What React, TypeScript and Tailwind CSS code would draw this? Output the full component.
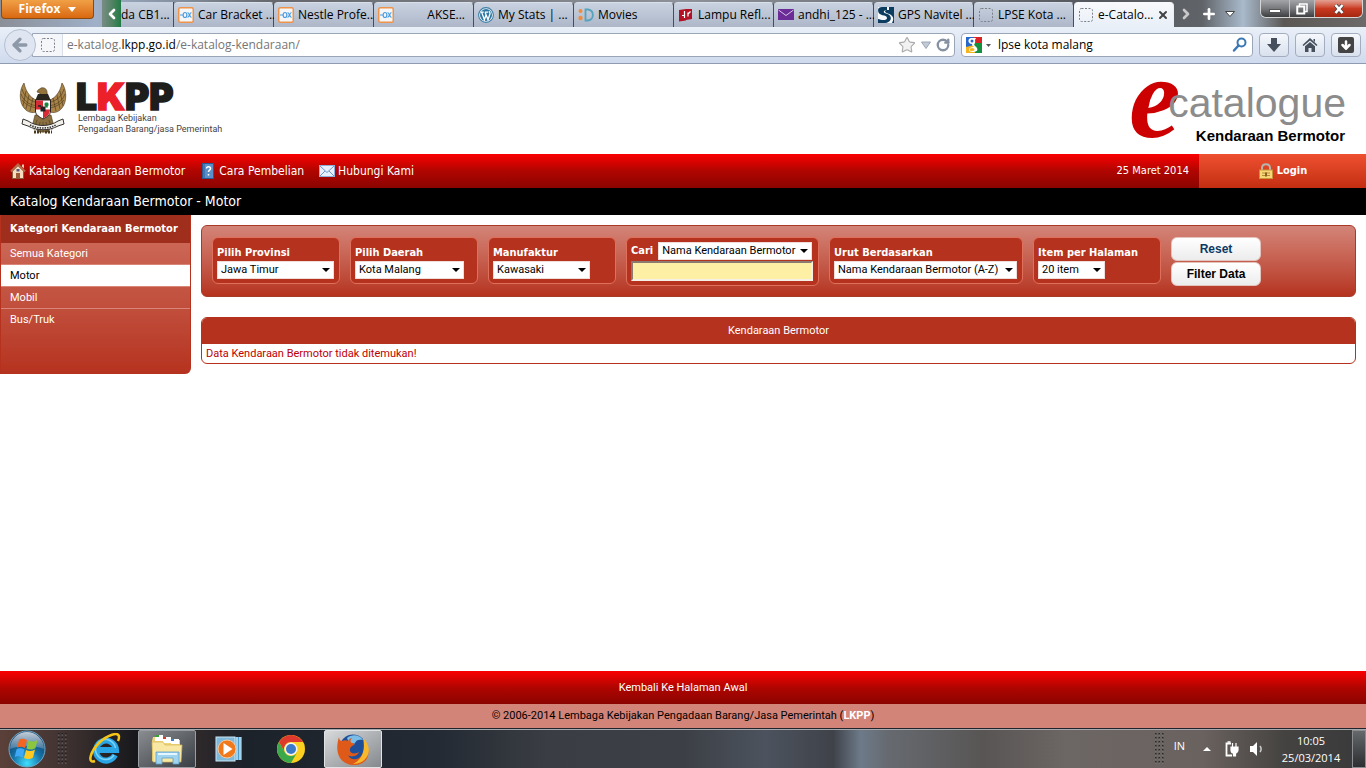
import React from 'react';
import { ArrowDown, ArrowLeft, ChevronLeft, ChevronRight, Plus, RotateCw, Star, X } from 'lucide-react';

type TabIcon = 'ox' | 'wordpress' | 'movies' | 'lampu' | 'mail' | 'navitel' | 'blank';

const tabs: { title: string; icon: TabIcon; indent?: boolean; active?: boolean }[] = [
  { title: 'Car Bracket ...', icon: 'ox' },
  { title: 'Nestle Profe...', icon: 'ox' },
  { title: 'AKSE...', icon: 'ox', indent: true },
  { title: 'My Stats | ...', icon: 'wordpress' },
  { title: 'Movies', icon: 'movies' },
  { title: 'Lampu Refl...', icon: 'lampu' },
  { title: 'andhi_125 - ...', icon: 'mail' },
  { title: 'GPS Navitel ...', icon: 'navitel' },
  { title: 'LPSE Kota ...', icon: 'blank' },
  { title: 'e-Catalo...', icon: 'blank', active: true },
];

const Favicon: React.FC<{ icon: TabIcon }> = ({ icon }) => (
  <svg className="w-4 h-4 shrink-0" viewBox="0 0 16 16" aria-hidden="true">
    {icon === 'ox' && (
      <>
        <rect x="0.75" y="0.75" width="14.5" height="14.5" rx="1.5" fill="#f4f6f8" stroke="#f0934a" strokeWidth="1.5" />
        <path d="M2 8h3M7 5.5c-2.5 0-2.5 5 0 5s2.5-5 0-5M9.5 5.5c2 0 2 5 4 5M9.5 10.500c2 0 2-5 4-5" fill="none" stroke="#4a9be0" strokeWidth="1.2" />
      </>
    )}
    {icon === 'wordpress' && (
      <>
        <circle cx="8" cy="8" r="7.4" fill="#f2f6f9" stroke="#3b7ea6" strokeWidth="1.1" />
        <circle cx="8" cy="8" r="6" fill="#2f77a3" />
        <path d="M2.800 5.200h3M6.800 5.200h3.400M3.700 5.400l2.700 7.400L8.200 7.500M7.200 5.400l2.800 7.400 2-6c.3-1.200-.5-1.800-.9-2.500" fill="none" stroke="#fff" strokeWidth="1.3" />
      </>
    )}
    {icon === 'movies' && (
      <>
        <circle cx="2.500" cy="4" r="2" fill="#f08c3c" />
        <circle cx="2.500" cy="11" r="2.200" fill="#f08c3c" />
        <path d="M7.500 2.500v11h2.500c6.500-1 6.500-10 0-11z" fill="none" stroke="#55a3bd" strokeWidth="1.800" />
      </>
    )}
    {icon === 'lampu' && (
      <>
        <path d="M1 3l7-1v11.500l-7 1zM8 2h6v10l-6 1z" fill="#b31225" />
        <path d="M6.500 4v4.500H4M6.500 8v3M10 5.500v4M10 7l2.500-2.500" fill="none" stroke="#fff" strokeWidth="1.2" />
      </>
    )}
    {icon === 'mail' && (
      <>
        <rect y="2" width="16" height="11" fill="#6b2c97" />
        <path d="M.5 3L8 8.500 15.500 3" fill="none" stroke="#d9c6e8" strokeWidth="1" />
      </>
    )}
    {icon === 'navitel' && (
      <>
        <rect width="16" height="16" fill="#f7fafc" />
        <path d="M11 0h5v16h-2c3-6 0-8-4-9.500C6 5 6 3 10 3h1z" fill="#0d3c61" />
        <path d="M0 3c0 7 9 4 9 8 0 3-6 2-9 1v4h8c6-1 7-8 0-9.500C4 5.500 6 3 9 3V0H4C2 0 0 1 0 3z" fill="#0d3c61" />
      </>
    )}
    {icon === 'blank' && (
      <rect x="1.500" y="1.500" width="13" height="13" rx="2" fill="none" stroke="#7b7f86" strokeDasharray="2 1.500" />
    )}
  </svg>
);

const TabStrip: React.FC = () => (
  <div className="flex items-start h-[27px] bg-[linear-gradient(90deg,#8b8f98_0%,#9fb0c8_7%,#65676c_20%,#8d929a_50%,#55585e_80%,#606368_88%,#a9bacb_91%,#5a5755_94%,#6d6b6a_100%)]">
    <button className="ml-px w-[93px] h-[19px] shrink-0 flex items-center justify-center gap-2 rounded-b-sm border border-t-0 border-[#8a4a12] bg-linear-to-b from-[#f0a045] to-[#d9680c] text-white text-xs font-bold">
      Firefox
      <svg className="w-2 h-[5px]" viewBox="0 0 8 5"><path d="M0 0h8L4 5z" fill="#fff" /></svg>
    </button>
    <button aria-label="Gulir tab ke kiri" className="ml-2 w-[19px] h-[27px] shrink-0 flex items-center justify-center bg-linear-to-r from-[#7a8c85] to-[#1c7a45] text-white">
      <ChevronLeft className="w-4 h-4" strokeWidth={4} />
    </button>
    <div className="flex flex-1 min-w-0 pt-0.5 h-[27px] text-xs text-black whitespace-nowrap">
      <a href="#tab" className="w-[53px] shrink-0 flex items-center overflow-hidden border-r border-[#4a4d55] bg-linear-to-b from-[#c9d2e0] to-[#adb7c8]">da CB1...</a>
      {tabs.map((tab) => (
        <div
          key={tab.title}
          className={
            tab.active
              ? 'flex-1 min-w-0 flex items-center gap-0.5 px-1 border-r border-t border-r-[#e9eff8] border-t-[#f7f9fc] bg-linear-to-b from-[#f7f9fc] to-[#e9eff8] rounded-t-sm'
              : 'flex-1 min-w-0 flex items-center gap-0.5 px-1 border-r border-t border-r-[#4a4d55] border-t-[#d9e0ea] bg-linear-to-b from-[#c9d2e0] to-[#adb7c8] rounded-t-sm'
          }
        >
          <Favicon icon={tab.icon} />
          <a href="#tab" className={tab.indent ? 'flex-1 min-w-0 text-right pr-1' : 'flex-1 min-w-0 pl-0.5'}>{tab.title}</a>
          {tab.active && <button aria-label="Tutup tab"><X className="w-3 h-3 text-[#444]" strokeWidth={4} /></button>}
        </div>
      ))}
    </div>
    <div className="w-[192px] shrink-0 flex items-start">
      <div className="flex items-center h-[27px] pl-1 gap-[7px] text-white">
        <button aria-label="Gulir tab ke kanan"><ChevronRight className="w-4 h-4 text-[#c9c9c9]" strokeWidth={4} /></button>
        <button aria-label="Tab baru"><Plus className="w-4 h-4" strokeWidth={4} /></button>
        <button aria-label="Daftar tab">
          <svg className="w-3 h-2" viewBox="0 0 12 8"><path d="M1.500 1.500h9L6 6.500z" fill="#fff" stroke="#444" /></svg>
        </button>
      </div>
      <div className="ml-auto mr-[3px] flex h-[18px] rounded-b-md border border-t-0 border-[#d5d5d5] overflow-hidden">
        <button aria-label="Kecilkan" className="w-7 flex items-center justify-center bg-linear-to-b from-[#a3a5a8] via-[#77797c] to-[#3c3e40]">
          <span className="w-3 h-1 mt-1 bg-white border border-[#555]" />
        </button>
        <button aria-label="Pulihkan" className="w-[26px] flex items-center justify-center border-x border-[#c0c0c0] bg-linear-to-b from-[#a3a5a8] via-[#77797c] to-[#3c3e40]">
          <svg className="w-3 h-3" viewBox="0 0 12 12"><path d="M3.500 3V1h7.500v7.500H9" fill="none" stroke="#fff" strokeWidth="1.500" /><rect x="1.250" y="3.500" width="7" height="7" fill="none" stroke="#fff" strokeWidth="2" /></svg>
        </button>
        <button aria-label="Tutup" className="w-[47px] flex items-center justify-center bg-linear-to-b from-[#e2a093] via-[#c93a22] to-[#a5270f]">
          <svg className="w-3 h-[10px]" viewBox="0 0 12 10"><path d="M2.500 1l7 8M9.500 1l-7 8" stroke="#444" strokeWidth="4" /><path d="M2.500 1l7 8M9.500 1l-7 8" stroke="#fff" strokeWidth="2.600" /></svg>
        </button>
      </div>
    </div>
  </div>
);

const toolButton = 'w-[30px] h-6 flex items-center justify-center rounded-sm border border-[#a3adbd] bg-linear-to-b from-[#f5f8fc] to-[#d9e1ee] text-[#46505c]';

const AddressBar: React.FC = () => (
  <div className="flex items-center h-[37px] pr-[5px] border-b border-[#8e9bb0] bg-linear-to-b from-[#eaf0f8] to-[#cfdaee] text-xs">
    <button aria-label="Kembali" className="ml-1 -mr-1 z-10 w-8 h-8 shrink-0 flex items-center justify-center rounded-full border border-[#b4bfd0] bg-[#dfe6f1] text-[#8d99a8]">
      <ArrowLeft className="w-5 h-5" strokeWidth={4} />
    </button>
    <div className="flex flex-1 items-center h-6 bg-white border border-[#9aa5b6] rounded-r-sm overflow-hidden">
      <div className="flex items-center justify-center w-[30px] h-full shrink-0 border-r border-[#d8dde6] bg-[#f4f6f9]"><Favicon icon="blank" /></div>
      <a href="#alamat" className="flex-1 pl-1 text-[#767676]">e-katalog.<span className="text-black">lkpp.go.id</span>/e-katalog-kendaraan/</a>
      <button aria-label="Tandai halaman"><Star className="w-[18px] h-[18px] text-[#aaa] fill-[#f2f2f2]" strokeWidth={1.5} /></button>
      <button aria-label="Riwayat alamat" className="ml-1">
        <svg className="w-3 h-3" viewBox="0 0 12 12"><path d="M1.500 3h9L6 9.500z" fill="#c2cad6" stroke="#9ca6b4" /></svg>
      </button>
      <button aria-label="Muat ulang" className="mx-1"><RotateCw className="w-[14px] h-[14px] text-[#8692a2]" strokeWidth={4} /></button>
    </div>
    <div className="ml-1.5 w-[292px] shrink-0 flex items-center h-6 pl-1 pr-1 bg-white border border-[#9aa5b6] rounded-sm">
      <svg className="w-4 h-4 shrink-0" viewBox="0 0 16 16">
        <rect width="16" height="16" rx="1" fill="#fff" />
        <path d="M8 0h8v6H9z" fill="#dc2323" />
        <path d="M8 6h8v10H8z" fill="#15903f" />
        <path d="M0 0h8v9L0 11z" fill="#2667c9" />
        <path d="M0 10l8-2 1 8H0z" fill="#f3b51f" />
        <path d="M10 1H5C1 2 2 7 6 7c0 2 1 2 2 3-6 0-7 5-1 5 6 0 5-4 2-6C7 7 10 7 9 3z" fill="#fff" />
        <circle cx="6" cy="4" r="1.500" fill="#2667c9" />
        <ellipse cx="6" cy="12.500" rx="2.500" ry="1.500" fill="#f3b51f" />
      </svg>
      <svg className="ml-1 w-[5px] h-[3px] shrink-0" viewBox="0 0 5 3"><path d="M0 0h5L2.500 3z" fill="#555" /></svg>
      <input aria-label="Pencarian web" defaultValue="lpse kota malang" className="flex-1 min-w-0 ml-[7px] outline-none text-black" />
      <button aria-label="Cari di web">
        <svg className="w-4 h-4" viewBox="0 0 16 16"><circle cx="9.500" cy="5.500" r="4" fill="none" stroke="#3b78b4" strokeWidth="2" /><path d="M6.500 8.500L2 13.500" stroke="#3b78b4" strokeWidth="2.500" strokeLinecap="round" /></svg>
      </button>
    </div>
    <div className="ml-1.5 flex gap-1.5 shrink-0">
      <button aria-label="Unduhan" className={toolButton}>
        <svg className="w-4 h-4" viewBox="0 0 16 16"><path d="M5 1h6v6h4l-7 8-7-8h4z" fill="currentColor" /></svg>
      </button>
      <button aria-label="Beranda" className={toolButton}>
        <svg className="w-4 h-4" viewBox="0 0 16 16"><path d="M8 1l7.500 7-1 1L8 3.500 1.500 9l-1-1zM8 5l5 4.200V15H9.500v-4h-3v4H3V9.200zM11.500 2H13v3l-1.500-1.300z" fill="currentColor" /></svg>
      </button>
      <button aria-label="Pengelola unduhan" className={toolButton}>
        <span className="w-4 h-4 flex items-center justify-center rounded-xs bg-[#444] text-white"><ArrowDown className="w-3 h-3" strokeWidth={5} /></span>
      </button>
    </div>
  </div>
);

const LkppLogo: React.FC = () => (
  <svg className="w-[204px] h-[68px] overflow-visible" viewBox="0 -12 204 68" role="img" aria-label="LKPP">
    {/* Garuda emblem */}
    <g stroke="#4a361a" strokeWidth="0.6">
      <path d="M4 1C-1 8-1 20 4 26c4 5 9 5 12 4l4-11C12 18 6 11 4 1z" fill="#a98549" />
      <path d="M42 1c5 7 5 19 0 25-4 5-9 5-12 4l-4-11C34 18 40 11 42 1z" fill="#a98549" />
      <path d="M2 7c2 8 9 13 17 14M1 12c3 8 9 11 17 12M2 18c4 5 9 7 15 8M44 7c-2 8-9 13-17 14M45 12c-3 8-9 11-17 12M44 18c-4 5-9 7-15 8M6 9L3 24M9 13L6 27M13 16l-3 13M40 9l3 15M37 13l3 14M33 16l3 13" fill="none" />
      <path d="M18 8l3-2c3-1 6 1 6 4l1 9h-9l1-8-3-1z" fill="#94743d" />
      <path d="M15 33h16l2 8-5 9H18l-5-9z" fill="#8a7040" />
      <path d="M17 38l-3 10M20 40l-2 10M23 40v11M26 40l2 10M29 38l3 10" />
    </g>
    <path d="M18 12h10l3 7H15z" fill="#29251f" />
    <path d="M15.500 18h15v11c0 4-4 6-7.500 8-3.500-2-7.500-4-7.500-8z" fill="#fff" stroke="#2a211b" />
    <path d="M16 18.500h7v9h-7zM23 27.500h7c0 5-3 7-7 9z" fill="#d92b35" />
    <path d="M26.500 20.500v5M24.500 22.500h4" stroke="#15833a" strokeWidth="2.500" />
    <path d="M18 24h3" stroke="#222" strokeWidth="1.500" />
    <rect x="20.500" y="24.500" width="5" height="5" fill="#222" />
    <path d="M3 37l5 2c9 6 21 6 30 0l5-2 1 5-6 2c-9 5-21 5-30 0l-6-2z" fill="#f4f1ea" stroke="#333" />
    <path d="M10 43c8 4 18 4 26 0" fill="none" stroke="#333" strokeWidth="1.500" strokeDasharray="1.500 1" />
    <path d="M14 50h7M25 50h7" stroke="#4a3b20" strokeWidth="3" strokeDasharray="2 1" />
    <text x="56" y="28" fontSize="37" fontFamily="Inter, sans-serif" fontWeight="900" fill="#1d1d1b" stroke="#1d1d1b" strokeWidth="1.500">
      L<tspan fill="#ec2028" stroke="#ec2028">K</tspan>PP
    </text>
    <text x="58" y="39" fontSize="9" fontFamily="Roboto, sans-serif" fill="#444">Lembaga Kebijakan</text>
    <text x="58" y="50" fontSize="9" fontFamily="Roboto, sans-serif" fill="#444">Pengadaan Barang/jasa Pemerintah</text>
  </svg>
);

const CatalogueLogo: React.FC = () => (
  <svg className="w-[220px] h-[72px] overflow-visible" viewBox="0 0 220 72" role="img" aria-label="e-catalogue Kendaraan Bermotor">
    <text x="1" y="62" fontSize="116" fontFamily="'Liberation Serif', serif" fontStyle="italic" fontWeight="700" fill="#c00">e</text>
    <text x="218" y="42" textAnchor="end" fontSize="41" fontFamily="'Liberation Sans', sans-serif" fill="#8c8c8c">catalogue</text>
    <text x="217" y="66" textAnchor="end" fontSize="15" fontFamily="'Liberation Sans', sans-serif" fontWeight="700" fill="#000">Kendaraan Bermotor</text>
  </svg>
);

const NavBar: React.FC = () => (
  <nav className="flex h-[34px] text-white bg-linear-to-b from-[#fb0000] via-[#b00500] to-[#8b0400]">
    <div className="flex flex-1 items-center pl-2.5 gap-[15px] text-xs">
      <a href="#katalog" className="flex items-center gap-[3px]">
        <svg className="w-4 h-4" viewBox="0 0 16 16"><path d="M2.500 8L8 2.500 13.500 8v7.500h-11z" fill="#f5dcc0" stroke="#8a5a3c" /><path d="M1 8.500L8 1.500l7 7" fill="none" stroke="#b66a4a" strokeWidth="2" /><path d="M12 1.500h2v4l-2-2z" fill="#e8c5a5" /><rect x="6" y="10" width="4" height="5" fill="#9b5a34" /><rect x="6.500" y="6" width="3" height="2.500" fill="#557" /></svg>
        Katalog Kendaraan Bermotor
      </a>
      <a href="#cara" className="flex items-center gap-[3px]">
        <svg className="w-4 h-4" viewBox="0 0 16 16"><rect x="2.500" y="0.500" width="11" height="15" fill="#5b8fc9" stroke="#275a92" /><path d="M4 1v14" stroke="#2b5f9c" /><path d="M6.500 5.500c0-2.500 4-2.500 4 0 0 1.800-2 1.600-2 3.500M8.500 11v1.500" fill="none" stroke="#fff" strokeWidth="1.500" /></svg>
        Cara Pembelian
      </a>
      <a href="#hubungi" className="flex items-center gap-[3px]">
        <svg className="w-4 h-4" viewBox="0 0 16 16"><rect x="0.500" y="2.500" width="15" height="11" fill="#e6effb" stroke="#8db0dd" /><path d="M1 3l7 6.500L15 3M1 13l5-5M15 13l-5-5" fill="none" stroke="#6f97cc" /></svg>
        Hubungi Kami
      </a>
    </div>
    <span className="self-center pr-2.5 text-[11px]">25 Maret 2014</span>
    <a href="#login" className="w-[167px] flex items-center justify-center gap-[3px] text-[11px] font-bold bg-linear-to-b from-[#ee5030] to-[#c42e10]">
      <svg className="w-4 h-4" viewBox="0 0 16 16"><path d="M4 8V5c0-5 8-5 8 0v3" fill="none" stroke="#b5b5ad" strokeWidth="2" /><rect x="1.500" y="7" width="13" height="8.500" fill="#f7d778" stroke="#c9953a" /><path d="M4 10h8M4 12.500h8" stroke="#b98a34" strokeWidth="1" /><rect x="7" y="9.500" width="2" height="4" fill="#8a6424" /></svg>
      Login
    </a>
  </nav>
);

const categories = ['Semua Kategori', 'Motor', 'Mobil', 'Bus/Truk'];

const Sidebar: React.FC = () => (
  <aside className="w-[191px] h-[159px] shrink-0 flex flex-col rounded-br-md border-x border-[#b5321e] bg-linear-to-b from-[#d07060] to-[#b5321e] text-[11px] text-white overflow-hidden">
    <h2 className="h-7 leading-7 pl-[9px] font-bold bg-[#a02e1c] whitespace-nowrap">Kategori Kendaraan Bermotor</h2>
    <ul className="font-['Roboto',sans-serif]">
      {categories.map((name) => (
        <li key={name} className="h-[22px] border-b border-[#d98578] last:border-b-0">
          <a href="#kategori" className={name === 'Motor' ? 'block h-full leading-[22px] pl-[9px] bg-white text-black' : 'block h-full leading-[22px] pl-[9px]'}>{name}</a>
        </li>
      ))}
    </ul>
  </aside>
);

const SelectBox: React.FC<{ id: string; value: string; width: string; title?: string }> = ({ id, value, width, title }) => (
  <div className={`relative ${width}`}>
    <select id={id} aria-label={title} className="block w-full h-[18px] pl-[3px] appearance-none rounded-none border border-[#f0dcd8] bg-white text-black text-[11px] leading-4 font-['Roboto',sans-serif]">
      <option>{value}</option>
    </select>
    <svg className="absolute right-1 top-[7px] w-2 h-1 pointer-events-none" viewBox="0 0 8 4"><path d="M0 0h8L4 4z" fill="#000" /></svg>
  </div>
);

const groupBox = 'px-1 pb-1 rounded-md border border-[#e0705c] bg-[#b5321e]';

const FilterGroup: React.FC<{ id: string; label: string; value: string; width: string; box: string }> = ({ id, label, value, width, box }) => (
  <div className={`${groupBox} ${box} pt-[7px]`}>
    <label htmlFor={id} className="block h-4 leading-4 font-bold whitespace-nowrap">{label}</label>
    <SelectBox id={id} value={value} width={width} />
  </div>
);

const formButton = "w-[90px] h-6 rounded-md border border-[#e3c4be] bg-linear-to-b from-white to-[#ececec] text-xs font-bold font-['Liberation_Sans',sans-serif]";

const FilterPanel: React.FC = () => (
  <form className="flex flex-wrap items-start gap-2.5 px-2.5 pt-[11px] pb-2.5 rounded-md border border-[#a83a2a] bg-linear-to-b from-[#d38478] to-[#b5321e] text-[11px] text-white">
    <FilterGroup id="provinsi" label="Pilih Provinsi" value="Jawa Timur" width="w-[117px]" box="w-32" />
    <FilterGroup id="daerah" label="Pilih Daerah" value="Kota Malang" width="w-[109px]" box="w-32" />
    <FilterGroup id="manufaktur" label="Manufaktur" value="Kawasaki" width="w-[97px]" box="w-32" />
    <div className={`${groupBox} w-[193px] pt-1 flex flex-col gap-px`}>
      <div className="flex items-center gap-[5px]">
        <label htmlFor="cari" className="font-bold">Cari</label>
        <SelectBox id="kolom" title="Kolom pencarian" value="Nama Kendaraan Bermotor" width="w-[154px]" />
      </div>
      <input id="cari" className="w-[182px] h-5 px-1 bg-[#fdf0a4] text-black border-2 border-t-[#8a7a72] border-l-[#8a7a72] border-b-[#f5efe6] border-r-[#f5efe6]" />
    </div>
    <FilterGroup id="urut" label="Urut Berdasarkan" value="Nama Kendaraan Bermotor (A-Z)" width="w-[183px]" box="w-[194px]" />
    <FilterGroup id="item" label="Item per Halaman" value="20 item" width="w-[67px]" box="w-32" />
    <div className="flex flex-col gap-px">
      <button type="reset" className={`${formButton} text-[#0b3a66]`}>Reset</button>
      <button type="button" className={`${formButton} text-black`}>Filter Data</button>
    </div>
  </form>
);

const ResultTable: React.FC = () => (
  <div className="mt-5 rounded-md border border-[#b5321e] overflow-hidden">
    <table className="w-full text-[11px] font-['Roboto',sans-serif]">
      <thead>
        <tr className="h-[26px] bg-[#b5321e] text-white"><th className="font-normal">Kendaraan Bermotor</th></tr>
      </thead>
      <tbody>
        <tr className="h-[19px] text-[#c00000]"><td className="pl-1 leading-[19px]">Data Kendaraan Bermotor tidak ditemukan!</td></tr>
      </tbody>
    </table>
  </div>
);

const Grip: React.FC = () => (
  <svg className="w-[10px] h-8 shrink-0" viewBox="0 0 10 32">
    {[0, 4, 8, 12, 16, 20, 24, 28].map((y) => (
      <g key={y}>
        <path d={`M1 ${y + 1}h1.500M4.500 ${y + 1}h1.500M8 ${y + 1}h1.500`} stroke="#17191c" strokeWidth="1.500" />
        <path d={`M1 ${y + 2}h1.500M4.500 ${y + 2}h1.500M8 ${y + 2}h1.500`} stroke="#8a8a8a" strokeWidth="0.800" />
      </g>
    ))}
  </svg>
);

const taskButton = 'w-[58px] h-[38px] flex items-center justify-center rounded-xs';

const Taskbar: React.FC = () => (
  <div className="flex items-center h-10 shrink-0 border-t border-[#20242c] bg-[linear-gradient(180deg,#a7a9ac_0,#a7a9ac_1px,transparent_1px),linear-gradient(90deg,#5a4038_0%,#453634_4%,#17181c_10%,#30292a_14%,#1c222a_18%,#232a33_32%,#3a3d43_40%,#3c3f45_50%,#4c535e_56%,#3f4249_61%,#6d7a89_63%,#666a70_65%,#585554_72%,#6c6664_78%,#6a625f_88%,#454341_94%,#38393b_100%)] text-white font-['Open_Sans','Noto_Sans',sans-serif]">
    <button aria-label="Mulai" className="ml-2">
      <svg className="w-[38px] h-[38px]" viewBox="0 0 38 38">
        <defs>
          <radialGradient id="orb" cx="50%" cy="90%" r="80%"><stop offset="0" stopColor="#3fe0ff" /><stop offset="0.5" stopColor="#1673a8" /><stop offset="1" stopColor="#123f6b" /></radialGradient>
          <linearGradient id="shine" x2="0" y2="1"><stop offset="0" stopColor="#fff" stopOpacity="0.75" /><stop offset="1" stopColor="#fff" stopOpacity="0.2" /></linearGradient>
        </defs>
        <circle cx="19" cy="19" r="18" fill="url(#orb)" stroke="#6fa8c8" />
        <path d="M2 19a17 17 0 0 1 34 0c-9-4-24-4-34 0z" fill="url(#shine)" />
        <path d="M11 10c3-2 5-1 8 0l-2 8c-3-1-5-2-8 0z" fill="#f26522" />
        <path d="M20.500 10.500c3 2 6 1 9-.5l-2 8c-3 2-6 2-9 .5z" fill="#8cc63f" />
        <path d="M8.500 19.500c3-2 5-1 8 0l-2 8c-3-1-5-2-8 0z" fill="#3fa9f5" />
        <path d="M18 20c3 2 6 1 9-.5l-2 8c-3 2-6 2-9 .5z" fill="#fdc921" />
      </svg>
    </button>
    <div className="ml-[11px] mr-[9px]"><Grip /></div>
    <div className="flex gap-1">
      <button aria-label="Internet Explorer" className={taskButton}>
        <svg className="w-8 h-8" viewBox="0 0 32 32">
          <path d="M26 22a10 10 0 1 1 1-5H10" fill="none" stroke="#2aa5e5" strokeWidth="6" />
          <path d="M25 22a10 10 0 1 1 1.500-7" fill="none" stroke="#7ad4f7" strokeWidth="1.500" />
          <path d="M6 28C-2 31 1 19 10 10 18 2 30-2 30 4c0 2-.5 3-1 4" fill="none" stroke="#f5c518" strokeWidth="2.500" />
        </svg>
      </button>
      <button aria-label="Windows Explorer" className={`${taskButton} border border-[#9a9ea2] bg-linear-to-br from-[#8a8d90] to-[#3a3f45]`}>
        <svg className="w-8 h-8" viewBox="0 0 32 32">
          <path d="M2 4h9l2 3h16v21H1V8z" fill="#efd67a" />
          <path d="M4 2h8v6H4z" fill="#fff" /><path d="M4 2h4v2H4z" fill="#35a52d" />
          <path d="M12 4h8v6h-8z" fill="#fff" /><path d="M12 4h3v2h-3z" fill="#d6402a" />
          <path d="M20 6h8v5h-8z" fill="#fff" /><path d="M20 6h3v2h-3z" fill="#3587cf" />
          <path d="M1 9h11l2 3h17l-1 17H2z" fill="#f8e8a4" stroke="#d6b756" strokeWidth="0.700" />
          <path d="M5 31V19h23v12h-6v-6H11v6z" fill="#9fd3ee" stroke="#5a9fc9" strokeWidth="0.800" />
          <path d="M7 21h19" stroke="#e4f6ff" strokeWidth="2" />
        </svg>
      </button>
      <button aria-label="Windows Media Player" className={taskButton}>
        <svg className="w-7 h-7" viewBox="0 0 28 28">
          <rect x="12" y="2" width="15" height="23" fill="#4e9acb" /><path d="M22 2v23M25 2v23" stroke="#bfe4f7" strokeWidth="1.500" />
          <rect x="1" y="2" width="19" height="24" fill="#7db9db" stroke="#cfe8f5" />
          <circle cx="12" cy="14" r="9" fill="#f0791b" stroke="#f7c9a0" /><path d="M8.500 8v12l9-6z" fill="#fff" />
        </svg>
      </button>
      <button aria-label="Google Chrome" className={taskButton}>
        <svg className="w-7 h-7" viewBox="0 0 28 28">
          <circle cx="14" cy="14" r="14" fill="#fbd01f" />
          <path d="M1.900 7A14 14 0 0 1 26.100 7H14a7 7 0 0 0-6.100 10.500z" fill="#dd3a2d" />
          <path d="M1.900 7A14 14 0 0 0 14 28l6.100-10.500A7 7 0 0 1 7.900 17.500z" fill="#3ba84a" />
          <circle cx="14" cy="14" r="6.500" fill="#f4f4f4" /><circle cx="14" cy="14" r="5" fill="#3c79c9" />
        </svg>
      </button>
      <button aria-label="Mozilla Firefox" className={`${taskButton} border border-[#e0e2e4] bg-linear-to-br from-[#d8dadc] to-[#85898d]`}>
        <svg className="w-8 h-8" viewBox="0 0 32 32">
          <circle cx="16" cy="15" r="13.500" fill="#1f4f98" />
          <path d="M10 5c4-4 13-4 16 2-4-1-7 0-8 3-1 2-4 1-5 3z" fill="#79bde8" />
          <path d="M2 4c0 2 1 4 3 4 2-1 4-1 6 0 1-2 3-3 4-3-2 2-2 4 0 5 2 0 3 1 2 2-2 1-4 2-4 4-1 4 4 6 9 3-1 4-8 6-11 3 2 5 9 6 13 1 3-3 4-8 3-14 5 5 6 13 2 18-7 8-21 6-26-2C-1 19 0 10 2 4z" fill="#df5a18" />
          <path d="M26 5c6 6 8 14 3 20-3 4-8 6-13 6 8-4 13-12 10-26z" fill="#f9b92c" />
        </svg>
      </button>
    </div>
    <div className="ml-auto"><Grip /></div>
    <span className="ml-2.5 -mt-1 text-[11px]">IN</span>
    <button aria-label="Tampilkan ikon tersembunyi" className="ml-[18px]">
      <svg className="w-2 h-1" viewBox="0 0 8 4"><path d="M0 4h8L4 0z" fill="#fff" /></svg>
    </button>
    <svg className="ml-3 w-4 h-4" viewBox="0 0 16 16">
      <path d="M8 2.500H3.500v12H9" fill="none" stroke="#fff" strokeWidth="1.800" /><path d="M4.500 1h3" stroke="#fff" strokeWidth="1.500" />
      <path d="M8 6h7v3c0 2-2 3-2.500 3v3h-2v-3C9 12 8 11 8 9zM9.500 2v4M13 2v4" fill="#fff" stroke="#fff" strokeWidth="1.200" />
    </svg>
    <svg className="ml-2.5 w-4 h-4" viewBox="0 0 16 16">
      <path d="M1 5h3l4-4v14l-4-4H1z" fill="#fff" /><path d="M11 5c1.500 2 1.500 4 0 6" fill="none" stroke="#ccc" strokeWidth="1.500" />
    </svg>
    <div className="ml-[11px] w-[70px] text-center text-[11px] leading-[17px]">
      <div>10:05</div>
      <div>25/03/2014</div>
    </div>
    <button aria-label="Tampilkan desktop" className="ml-1.5 w-[14px] h-[38px] border border-[#8b8d90] bg-linear-to-b from-[#66696c] to-[#2c2e30]" />
  </div>
);

const App: React.FC = () => (
  <div className="min-h-screen flex flex-col bg-white">
    <div className="font-['Open_Sans','Noto_Sans',sans-serif]">
      <TabStrip />
      <AddressBar />
    </div>
    <div className="flex flex-1 flex-col font-['DejaVu_Sans_Condensed','Noto_Sans',sans-serif]">
      <header className="flex items-start justify-between h-[90px] pl-5 pr-[18px]">
        <div className="pt-1.5"><LkppLogo /></div>
        <div className="pt-[11px]"><CatalogueLogo /></div>
      </header>
      <NavBar />
      <h1 className="h-[27px] leading-[27px] pl-2.5 bg-black text-white text-sm">Katalog Kendaraan Bermotor - Motor</h1>
      <div className="flex flex-1 items-start">
        <Sidebar />
        <main className="flex-1 min-w-0 p-2.5">
          <FilterPanel />
          <ResultTable />
        </main>
      </div>
      <footer className="text-center text-[11px] font-['Roboto',sans-serif]">
        <div className="h-[33px] leading-[33px] bg-linear-to-b from-[#fb0000] via-[#b00500] to-[#8b0400]">
          <a href="#awal" className="text-white">Kembali Ke Halaman Awal</a>
        </div>
        <p className="h-6 leading-6 bg-[#d38478] text-black">
          © 2006-2014 Lembaga Kebijakan Pengadaan Barang/Jasa Pemerintah (<a href="#lkpp" className="font-bold text-white">LKPP</a>)
        </p>
      </footer>
    </div>
    <Taskbar />
  </div>
);

export default App;
